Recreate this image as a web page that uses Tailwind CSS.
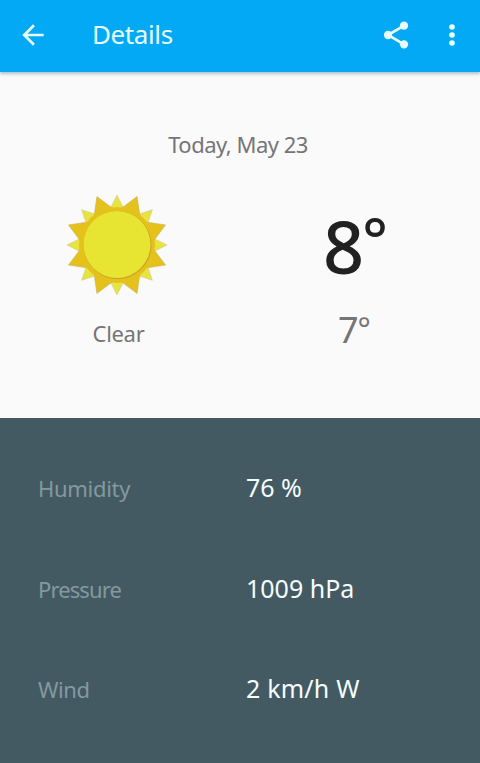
<!DOCTYPE html>
<html lang="en">
  <head>
    <meta charset="UTF-8" />
    <meta name="viewport" content="width=device-width, initial-scale=1.0" />
    <title>Details</title>
    <script src="https://cdn.jsdelivr.net/npm/@tailwindcss/browser@4"></script>
  </head>
  <body
    class="flex h-[763px] w-[480px] flex-col overflow-hidden bg-[#fafafa] font-['Noto_Sans',sans-serif]"
  >
    <header
      class="z-10 flex h-[72px] shrink-0 items-center bg-[#03a9f4] pr-3 pb-[3px] pl-[17px] text-[#e8fdff] shadow-[0_2px_3px_rgba(0,60,100,0.3)]"
    >
      <svg class="size-8" viewBox="0 0 24 24" fill="currentColor">
        <path
          d="M20 11H7.83l5.59-5.59L12 4l-8 8 8 8 1.41-1.41L7.83 13H20v-2z"
        />
      </svg>
      <h1 class="mt-[-2px] ml-[43px] flex-1 text-[26px] leading-8 tracking-[-0.4px]">
        Details
      </h1>
      <svg class="mr-6 size-8" viewBox="0 0 24 24" fill="currentColor">
        <path d="M18 5L6 12l12 7" fill="none" stroke="currentColor" stroke-width="2" />
        <circle cx="18" cy="5" r="3.1" />
        <circle cx="6" cy="12" r="3.1" />
        <circle cx="18" cy="19" r="3.1" />
      </svg>
      <svg class="size-8" viewBox="0 0 24 24" fill="currentColor">
        <circle cx="12" cy="6" r="2.1" />
        <circle cx="12" cy="12" r="2.1" />
        <circle cx="12" cy="18" r="2.1" />
      </svg>
    </header>

    <main class="h-[346px] shrink-0 pt-[56px] text-[#757575]">
      <p class="pr-1 text-center text-[22px] leading-8 tracking-[-0.5px]">Today, May 23</p>
      <div class="mt-[33px] grid grid-cols-2">
        <div class="flex flex-col items-center pr-[6px]">
          <svg class="h-[104px] w-[104px]" viewBox="-52 -52 104 104">
            <!-- pale rays -->
            <g fill="#e7e43f" stroke="#c9c58c" stroke-width="0.5">
              <path id="ray" d="M0-50L-8-34H8z" />
              <use href="#ray" transform="rotate(45)" />
              <use href="#ray" transform="rotate(90)" />
              <use href="#ray" transform="rotate(135)" />
              <use href="#ray" transform="rotate(180)" />
              <use href="#ray" transform="rotate(225)" />
              <use href="#ray" transform="rotate(270)" />
              <use href="#ray" transform="rotate(315)" />
            </g>
            <!-- gold rays -->
            <g fill="#e5c21b" stroke="#c9ae55" stroke-width="0.5">
              <path id="gold" transform="rotate(22.5)" d="M0-52.5L-11-34H11z" />
              <use href="#gold" transform="rotate(45)" />
              <use href="#gold" transform="rotate(90)" />
              <use href="#gold" transform="rotate(135)" />
              <use href="#gold" transform="rotate(180)" />
              <use href="#gold" transform="rotate(225)" />
              <use href="#gold" transform="rotate(270)" />
              <use href="#gold" transform="rotate(315)" />
            </g>
            <circle r="38" fill="#e5c21b" />
            <circle cx="0.5" cy="0" r="34" fill="#c6a32b" />
            <circle cx="0" cy="-0.5" r="33.5" fill="#e7e532" />
          </svg>
          <p class="mt-[20px] pl-[3px] text-[22px] leading-8 tracking-[-0.3px]">Clear</p>
        </div>
        <div class="flex flex-col">
          <p class="mt-[9px] flex pl-[83px] leading-[88px] text-[#212121]">
            <span class="text-[72px] font-medium tracking-[-2px]">8</span>
            <span class="mt-[-7px] text-[60px] font-medium tracking-[-1px]">°</span>
          </p>
          <p class="mt-[18px] flex pl-[98px] leading-[44px]">
            <span class="text-[36px] tracking-[-1px]">7</span>
            <span class="mt-[-2px] text-[31px]">°</span>
          </p>
        </div>
      </div>
    </main>

    <section class="flex-1 bg-[#445a62] pt-[50px] pl-[38px]">
      <dl class="grid auto-rows-[100px] grid-cols-[208px_1fr] items-start leading-10">
        <dt class="text-[22px] tracking-[-0.3px] text-[#8299a0]">Humidity</dt>
        <dd class="mt-[-1px] text-[25px] text-[#f4fdff]">76 %</dd>
        <dt class="pt-px text-[22px] tracking-[-0.9px] text-[#8299a0]">Pressure</dt>
        <dd class="text-[25px] text-[#f4fdff]">1009 hPa</dd>
        <dt class="pt-px text-[22px] tracking-[-0.4px] text-[#8299a0]">Wind</dt>
        <dd class="text-[25px] tracking-[0.2px] text-[#f4fdff]">2 km/h W</dd>
      </dl>
    </section>
  </body>
</html>
